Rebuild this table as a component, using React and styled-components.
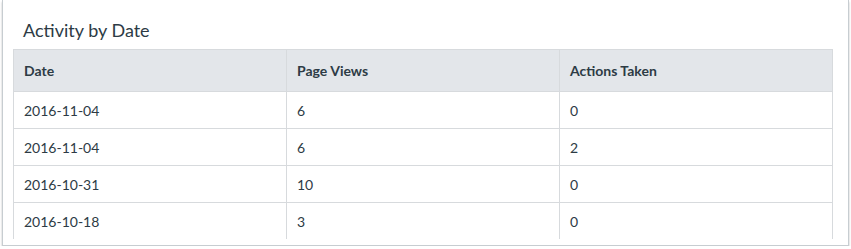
import React from 'react';
import styled, { createGlobalStyle } from 'styled-components';

const Global = createGlobalStyle`
  body {
    margin: 0;
    background: #fff;
    font-family: Lato, "Open Sans", sans-serif;
    color: #2d3b45;
  }
`

const Card = styled.section`
  margin-left: 2px;
  width: 847px;
  box-sizing: border-box;
  border: 1px solid #c7cdd1;
  border-top: none;
  box-shadow: 0 2px 2px rgba(0, 0, 0, 0.25);
  padding: 19px 15px 6px 10px;
`

const Title = styled.h2`
  margin: 0 0 8px 10px;
  font-size: 18px;
  font-weight: 400;
  line-height: 22px;
  color: #2d3b45;
`

const Table = styled.table`
  width: 100%;
  border-collapse: collapse;
  table-layout: fixed;
  font-size: 14px;
`

const Th = styled.th`
  text-align: left;
  font-weight: 700;
  height: 41px;
  padding: 0 10px;
  background: #e3e6ea;
  border: 1px solid #d7dadd;
  border-bottom: none;
`

const Td = styled.td`
  height: 36px;
  padding: 0 10px;
  border: 1px solid #d7dadd;
  border-bottom: ${p => (p.$last ? 'none' : '1px solid #d7dadd')};
`

const rows = [
  ['2016-11-04', '6', '0'],
  ['2016-11-04', '6', '2'],
  ['2016-10-31', '10', '0'],
  ['2016-10-18', '3', '0'],
]

export default function App() {
  return (
    <>
      <Global />
      <Card>
        <Title>Activity by Date</Title>
        <Table>
          <thead>
            <tr>
              <Th>Date</Th>
              <Th>Page Views</Th>
              <Th>Actions Taken</Th>
            </tr>
          </thead>
          <tbody>
            {rows.map((r, i) => (
              <tr key={i}>
                {r.map((c, j) => (
                  <Td key={j} $last={i === rows.length - 1}>{c}</Td>
                ))}
              </tr>
            ))}
          </tbody>
        </Table>
      </Card>
    </>
  );
}
